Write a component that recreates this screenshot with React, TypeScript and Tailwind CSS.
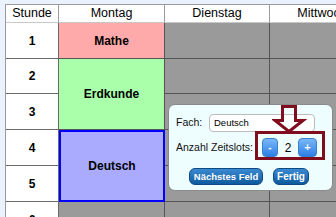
import React from 'react';

type Cell = {
  text?: string;
  kind: 'head' | 'hour' | 'gray' | 'subject';
  color?: string;
  span?: boolean;
  selected?: boolean;
};

const cells: Cell[] = [
  { text: 'Stunde', kind: 'head' },
  { text: 'Montag', kind: 'head' },
  { text: 'Dienstag', kind: 'head' },
  { text: 'Mittwoch', kind: 'head' },
  // 1
  { text: '1', kind: 'hour' },
  { text: 'Mathe', kind: 'subject', color: 'bg-[#ffaaaa]' },
  { kind: 'gray' },
  { kind: 'gray' },
  // 2
  { text: '2', kind: 'hour' },
  { text: 'Erdkunde', kind: 'subject', color: 'bg-[#aaffaa]', span: true },
  { kind: 'gray' },
  { kind: 'gray' },
  // 3
  { text: '3', kind: 'hour' },
  { kind: 'gray' },
  { kind: 'gray' },
  // 4
  { text: '4', kind: 'hour' },
  { text: 'Deutsch', kind: 'subject', color: 'bg-[#aaaaff]', span: true, selected: true },
  { kind: 'gray' },
  { kind: 'gray' },
  // 5
  { text: '5', kind: 'hour' },
  { kind: 'gray' },
  { kind: 'gray' },
  // 6
  { text: '6', kind: 'hour' },
  { kind: 'gray' },
  { kind: 'gray' },
  { kind: 'gray' },
];

function GridCell({ cell }: { cell: Cell }) {
  if (cell.kind === 'head') {
    return (
      <div className="flex items-center justify-center bg-white border-r border-r-[#9a9a9a] border-b border-b-[#c8c8c8] text-[12.5px] text-black whitespace-nowrap overflow-hidden">
        {cell.text}
      </div>
    );
  }
  if (cell.kind === 'hour') {
    return (
      <div className="flex items-center justify-center bg-white border-r border-b border-[#6a6a6a] text-[12px] font-bold text-black">
        {cell.text}
      </div>
    );
  }
  if (cell.kind === 'gray') {
    return <div className="bg-[#9a9a9a] border-r border-b border-[#555555]" />;
  }
  return (
    <div
      className={`flex items-center justify-center text-[12px] font-bold text-black ${cell.color} ${
        cell.span ? 'row-span-2' : ''
      } ${cell.selected ? 'border-2 border-[#0000ff]' : 'border-r border-b border-[#555555]'}`}
    >
      {cell.text}
    </div>
  );
}

export default function App() {
  return (
    <div
      className="relative w-[336px] h-[217px] overflow-hidden bg-[#eaf2fd] pt-[4px] pl-[5px]"
      style={{ fontFamily: '"Liberation Sans", Arial, sans-serif' }}
    >
      {/* Timetable */}
      <div className="grid grid-cols-[53px_106px_105px_105px] grid-rows-[18px_36px_35px_36px_36px_36px_36px] w-max border-t border-l border-[#9a9a9a]">
        {cells.map((c, i) => (
          <GridCell key={i} cell={c} />
        ))}
      </div>

      {/* Edit popup */}
      <div className="absolute left-[168px] top-[104px] w-[165px] h-[87px] rounded-[7px] border border-[#8a8a8a] bg-[#eefeff] flex flex-col pl-[7px] pt-[9px]">
        <div className="flex items-center h-[18px]">
          <span className="text-[10.5px] text-[#111] w-[33px]">Fach:</span>
          <div className="w-[106px] h-[18px] rounded-[4px] border border-[#bcbcbc] bg-white flex items-center pl-[4px] text-[9.5px] text-black">
            Deutsch
          </div>
        </div>
        <div className="flex items-center h-[19px] mt-[6px]">
          <span className="text-[10.5px] text-[#111] w-[86px] whitespace-nowrap">Anzahl Zeitslots:</span>
          <button className="w-[16px] h-[19px] rounded-[4px] border border-[#3a7ed0] bg-gradient-to-b from-[#7ab8f6] to-[#2a7fe6] text-white text-[10px] font-bold leading-none">
            -
          </button>
          <span className="w-[20px] text-center text-[12px] text-black">2</span>
          <button className="w-[19px] h-[19px] rounded-[4px] border border-[#3a7ed0] bg-gradient-to-b from-[#7ab8f6] to-[#2a7fe6] text-white text-[11px] font-bold leading-none">
            +
          </button>
        </div>
        <div className="flex items-center gap-[10px] mt-[11px] pl-[13px]">
          <button className="w-[74px] h-[17px] rounded-[6px] border border-[#0b4a82] bg-gradient-to-b from-[#3a8ad2] to-[#0b5a9e] text-white text-[9.5px] font-bold leading-none">
            Nächstes Feld
          </button>
          <button className="w-[36px] h-[17px] rounded-[6px] border border-[#0b4a82] bg-gradient-to-b from-[#3a8ad2] to-[#0b5a9e] text-white text-[10px] font-bold leading-none">
            Fertig
          </button>
        </div>
      </div>

      {/* Annotation: red box + arrow */}
      <div className="absolute left-[255px] top-[131px] w-[70px] h-[29px] border-[3px] border-[#7f0d1e]" />
      <svg className="absolute left-[272px] top-[103px]" width="36" height="32" viewBox="0 0 36 32">
        <polygon
          points="10.5,3.5 23.5,3.5 23.5,17.5 31,17.5 17,28.5 3,17.5 10.5,17.5"
          fill="none"
          stroke="#7f0d1e"
          strokeWidth="3"
          strokeLinejoin="miter"
        />
      </svg>
    </div>
  );
}
